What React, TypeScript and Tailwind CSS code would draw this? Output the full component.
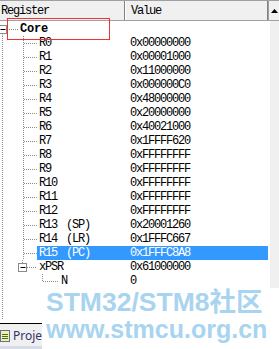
import React from "react";

const regs: [string, string, string?][] = [
  ["R0", "0x00000000"],
  ["R1", "0x00001000"],
  ["R2", "0x11000000"],
  ["R3", "0x000000C0"],
  ["R4", "0x48000000"],
  ["R5", "0x20000000"],
  ["R6", "0x40021000"],
  ["R7", "0x1FFFF620"],
  ["R8", "0xFFFFFFFF"],
  ["R9", "0xFFFFFFFF"],
  ["R10", "0xFFFFFFFF"],
  ["R11", "0xFFFFFFFF"],
  ["R12", "0xFFFFFFFF"],
  ["R13", "0x20001260", "(SP)"],
  ["R14", "0x1FFFC667", "(LR)"],
  ["R15", "0x1FFFC8A8", "(PC)"],
];

const dot = { stroke: "#8a8a8a", strokeWidth: 1, strokeDasharray: "1 1" };
const mono = "font-['Liberation_Mono',monospace] text-[12px] tracking-[-1.2px] leading-[14px]";

function Box({ x }: { x: number }) {
  return (
    <g>
      <rect x={x - 4} y={3.5} width={8} height={8} fill="#fff" stroke="#8a8a8a" />
      <line x1={x - 2} y1={7.5} x2={x + 3} y2={7.5} stroke="#000" />
    </g>
  );
}

function Row({
  conn,
  label,
  extra,
  value,
  selected,
}: {
  conn: React.ReactNode;
  label: string;
  extra?: string;
  value?: string;
  selected?: boolean;
}) {
  return (
    <div className="flex h-[14px] shrink-0">
      {conn}
      <div className={`flex flex-1 ${selected ? "bg-[#3399ff] text-white" : "text-black"}`}>
        <div className={`flex-1 flex pl-[2px] ${mono}`}>
          <span className="w-[27px]">{label}</span>
          {extra && <span>{extra}</span>}
        </div>
        {value !== undefined && <div className={`w-[143px] pl-[5px] ${mono}`}>{value}</div>}
      </div>
    </div>
  );
}

export default function App() {
  return (
    <div className="relative w-[279px] h-[349px] overflow-hidden bg-white flex flex-col">
      <div className="flex h-[323px] shrink-0">
        <div className="w-[268px] flex flex-col">
          {/* header */}
          <div className="flex h-[21px] shrink-0 bg-[#f0f0f0] border-t border-b border-[#a0a0a0]">
            <div className="w-[125px] border-r border-[#808080] flex items-center pl-[1px] font-['Liberation_Mono',monospace] text-[12px] tracking-[-1.2px] text-black">
              Register
            </div>
            <div className="flex-1 border-l border-white border-r border-r-[#808080] flex items-center pl-[5px] font-['Liberation_Mono',monospace] text-[12px] tracking-[-1.2px] text-black">
              Value
            </div>
          </div>
          <div className="h-[1px] shrink-0" />
          {/* Core */}
          <div className="flex h-[14px] shrink-0">
            <svg width={20} height={14} className="shrink-0">
              <line x1={2.5} y1={11.5} x2={2.5} y2={14} {...dot} />
              <line x1={7} y1={7.5} x2={19} y2={7.5} {...dot} />
              <Box x={2.5} />
            </svg>
            <div className="font-['Liberation_Mono',monospace] font-bold text-[12px] tracking-[-0.2px] leading-[14px] text-black">
              Core
            </div>
          </div>
          {regs.map(([l, v, e]) => (
            <Row
              key={l}
              label={l}
              extra={e}
              value={v}
              selected={l === "R15"}
              conn={
                <svg width={37} height={14} className="shrink-0">
                  <line x1={2.5} y1={0} x2={2.5} y2={14} {...dot} />
                  <line x1={23.5} y1={0} x2={23.5} y2={14} {...dot} />
                  <line x1={24} y1={7.5} x2={37} y2={7.5} {...dot} />
                </svg>
              }
            />
          ))}
          <Row
            label="xPSR"
            value="0x61000000"
            conn={
              <svg width={37} height={14} className="shrink-0">
                <line x1={2.5} y1={0} x2={2.5} y2={14} {...dot} />
                <line x1={22.5} y1={0} x2={22.5} y2={4} {...dot} />
                <line x1={27} y1={7.5} x2={37} y2={7.5} {...dot} />
                <Box x={22.5} />
              </svg>
            }
          />
          <div className="flex h-[14px] shrink-0">
            <svg width={59} height={14} className="shrink-0">
              <line x1={2.5} y1={0} x2={2.5} y2={14} {...dot} />
              <line x1={42.5} y1={0} x2={42.5} y2={7.5} {...dot} />
              <line x1={43} y1={7.5} x2={58} y2={7.5} {...dot} />
            </svg>
            <div className={`w-[66px] pl-[2px] ${mono}`}>N</div>
            <div className={`flex-1 pl-[5px] ${mono}`}>0</div>
          </div>
          <div className="flex-1 flex">
            <svg width={4} height={34} className="shrink-0">
              <line x1={2.5} y1={0} x2={2.5} y2={32} {...dot} />
            </svg>
          </div>
        </div>
        {/* vertical scrollbar */}
        <div className="w-[11px] flex flex-col">
          <div className="h-[21px] shrink-0 bg-[#f0f0f0] border-l border-t border-b border-[#a0a0a0] flex items-center justify-center">
            <svg width={7} height={4}>
              <polygon points="3.5,0 7,4 0,4" fill="#000" />
            </svg>
          </div>
          <div className="flex-1 bg-[#f0f0f0] border-l-2 border-white" />
          <div className="h-[10px] shrink-0 bg-[#f0f0f0] border-t border-[#404040] border-l border-l-[#a0a0a0] flex items-start justify-end pr-[1px] pt-[1px]">
            <svg width={6} height={4}>
              <polygon points="0,0 6,0 3,4" fill="#000" />
            </svg>
          </div>
          <div className="h-[5px] shrink-0 bg-white" />
        </div>
      </div>
      {/* bottom tab strip */}
      <div className="flex-1 bg-[#f0f0f0] border-t border-black flex items-start pt-[5px] relative">
        <div className="w-[10px] h-[12px] mt-[1px] border border-[#6a6aa0] bg-[#f6f0a0] flex flex-col justify-center gap-[1px] px-[1px]">
          <div className="h-[1px] bg-[#2a7a2a]" />
          <div className="h-[1px] bg-[#2a7a2a]" />
          <div className="h-[1px] bg-[#2a7a2a]" />
        </div>
        <span className="ml-[3px] whitespace-nowrap font-['Noto_Sans',sans-serif] text-[12px] leading-[14px] text-[#34346a]">Projec</span>
        <div className="absolute left-0 right-0 bottom-0 h-[3px] bg-[#d6dbe9]" />
      </div>
      {/* watermark */}
      <div className="absolute left-[42px] top-[288px] w-[237px] h-[61px] bg-white flex flex-col pl-[4px]">
        <div className="font-['Liberation_Sans','Noto_Sans_CJK_SC',sans-serif] font-bold text-[26.5px] leading-[28px] text-[#a8d4ef] whitespace-nowrap">
          STM32/STM8社区
        </div>
        <div className="font-['Liberation_Sans',sans-serif] font-bold text-[25px] leading-[26px] text-[#a8d4ef] whitespace-nowrap">
          www.stmcu.org.cn
        </div>
      </div>
      {/* red annotation box */}
      <div className="absolute left-[7px] top-[18px] w-[103px] h-[22px] border border-[#ee3333]" />
    </div>
  );
}
